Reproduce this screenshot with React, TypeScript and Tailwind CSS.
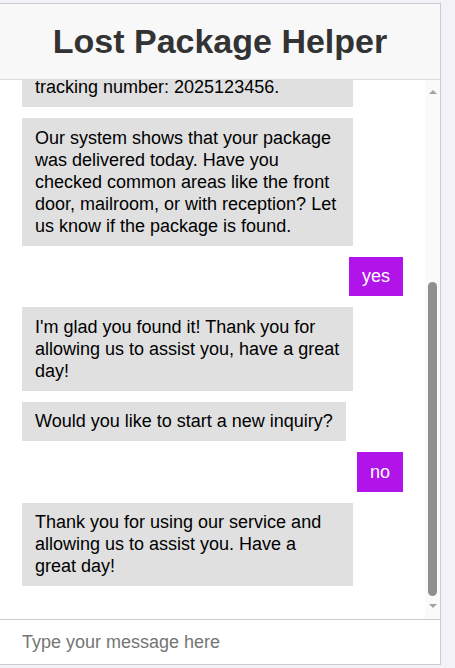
import React, { useState } from "react";

type Message = {
  from: "bot" | "user";
  text: React.ReactNode;
};

const messages: Message[] = [
  {
    from: "bot",
    text: (
      <>
        Thank you! I'm looking up the package
        <br />
        tracking number: 2025123456.
      </>
    ),
  },
  {
    from: "bot",
    text: "Our system shows that your package was delivered today. Have you checked common areas like the front door, mailroom, or with reception? Let us know if the package is found.",
  },
  { from: "user", text: "yes" },
  {
    from: "bot",
    text: "I'm glad you found it! Thank you for allowing us to assist you, have a great day!",
  },
  { from: "bot", text: "Would you like to start a new inquiry?" },
  { from: "user", text: "no" },
  {
    from: "bot",
    text: "Thank you for using our service and allowing us to assist you. Have a great day!",
  },
];

const Arrow = ({ down }: { down?: boolean }) => (
  <svg width="8" height="4" viewBox="0 0 8 4" className="mx-auto block shrink-0">
    <path d={down ? "M0 0H8L4 4Z" : "M4 0L8 4H0Z"} fill="#a3a3a3" />
  </svg>
);

const App: React.FC = () => {
  const [input, setInput] = useState("");

  return (
    <div className="min-h-[668px] bg-[#f2f2f7] pt-[3px] font-['Liberation_Sans',Arial,sans-serif]">
      <div className="ml-[-1px] w-[442px] h-[662px] flex flex-col bg-white border border-[#cccccc]">
        <div className="h-[76px] shrink-0 flex items-center justify-center bg-[#f8f8f8] border-b border-[#dddddd]">
          <h1 className="text-[34px] font-bold text-[#333333] leading-none pb-[1px]">
            Lost Package Helper
          </h1>
        </div>

        <div className="flex-1 min-h-0 flex">
          {/* newest message sits at the bottom, older ones clip off the top */}
          <div className="flex-1 min-w-0 overflow-hidden px-[22px] pb-[33px] flex flex-col justify-end gap-[11px]">
            {messages.map((m, i) =>
              m.from === "bot" ? (
                <div
                  key={i}
                  className="self-start shrink-0 max-w-[331px] bg-[#e0e0e0] text-black text-[18px] leading-[22px] px-[13px] py-[8.75px]"
                >
                  {m.text}
                </div>
              ) : (
                <div
                  key={i}
                  className="self-end shrink-0 bg-[#b114e8] text-white text-[18px] leading-[22px] px-[13px] py-[8.75px]"
                >
                  {m.text}
                </div>
              )
            )}
          </div>

          {/* scrollbar */}
          <div className="w-[15px] shrink-0 bg-[#fafafa] flex flex-col pt-[10px] pb-[11px]">
            <Arrow />
            <div className="flex-1" />
            <div className="w-[9px] h-[314px] mx-auto rounded-full bg-[#8f8f8f]" />
            <div className="h-[8px]" />
            <Arrow down />
          </div>
        </div>

        <div className="h-[45px] shrink-0 border-t border-[#cccccc] flex">
          <input
            autoFocus
            value={input}
            onChange={(e) => setInput(e.target.value)}
            placeholder="Type your message here"
            className="w-full px-[22px] text-[18px] text-black placeholder:text-[#757575] outline-none bg-white"
          />
        </div>
      </div>
    </div>
  );
};

export default App;
